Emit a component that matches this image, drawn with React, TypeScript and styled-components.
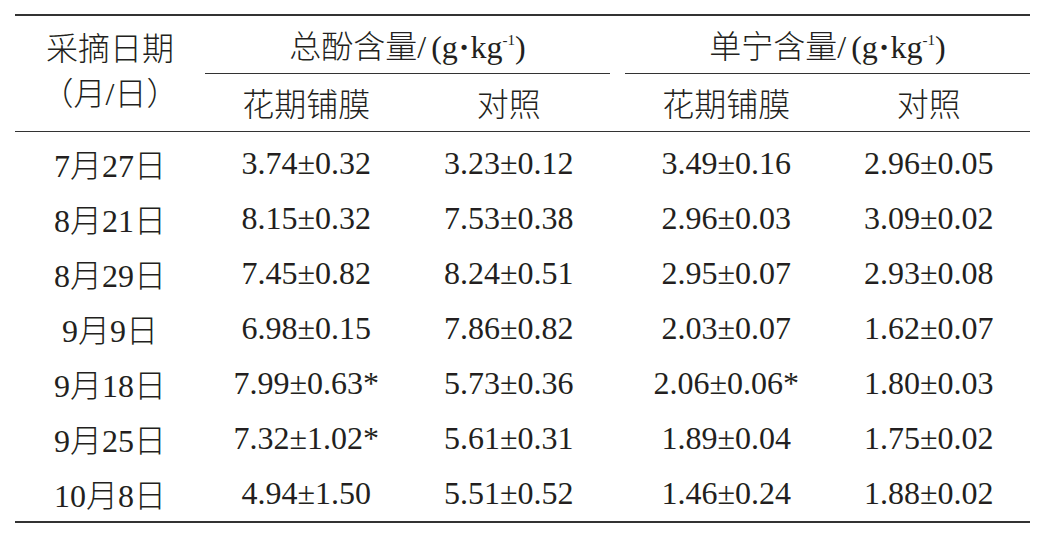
import styled, { createGlobalStyle } from "styled-components";

const GlobalStyle = createGlobalStyle`
  html, body {
    margin: 0;
    padding: 0;
    background: #ffffff;
  }
  body {
    font-family: "Liberation Serif", "Noto Sans CJK SC", serif;
    font-weight: 300;
    color: #231f20;
  }
`;

type Row = { date: string; values: string[] };

const rows: Row[] = [
  { date: "7月27日", values: ["3.74±0.32", "3.23±0.12", "3.49±0.16", "2.96±0.05"] },
  { date: "8月21日", values: ["8.15±0.32", "7.53±0.38", "2.96±0.03", "3.09±0.02"] },
  { date: "8月29日", values: ["7.45±0.82", "8.24±0.51", "2.95±0.07", "2.93±0.08"] },
  { date: "9月9日", values: ["6.98±0.15", "7.86±0.82", "2.03±0.07", "1.62±0.07"] },
  { date: "9月18日", values: ["7.99±0.63*", "5.73±0.36", "2.06±0.06*", "1.80±0.03"] },
  { date: "9月25日", values: ["7.32±1.02*", "5.61±0.31", "1.89±0.04", "1.75±0.02"] },
  { date: "10月8日", values: ["4.94±1.50", "5.51±0.52", "1.46±0.24", "1.88±0.02"] },
];

function App() {
  return (
    <>
      <GlobalStyle />
      <Page>
        <Table>
          <Head>
            <DateHead>
              <span>采摘日期</span>
              <span>（月/日）</span>
            </DateHead>
            <GroupHead $col={2}>
              <span>
                总酚含量/<Paren>(</Paren>g<Dot>·</Dot>kg<Sup>-1</Sup>)
              </span>
            </GroupHead>
            <GroupHead $col={5}>
              <span>
                单宁含量/<Paren>(</Paren>g<Dot>·</Dot>kg<Sup>-1</Sup>)
              </span>
            </GroupHead>
            <SubHead $col={2}>花期铺膜</SubHead>
            <SubHead $col={3}>对照</SubHead>
            <SubHead $col={5}>花期铺膜</SubHead>
            <SubHead $col={6}>对照</SubHead>
          </Head>
          <Body>
            {rows.map((r) => (
              <BodyRow key={r.date}>
                <Cell $col={1}>{r.date}</Cell>
                <Cell $col={2}>{r.values[0]}</Cell>
                <Cell $col={3}>{r.values[1]}</Cell>
                <Cell $col={5}>{r.values[2]}</Cell>
                <Cell $col={6}>{r.values[3]}</Cell>
              </BodyRow>
            ))}
          </Body>
        </Table>
      </Page>
    </>
  );
}

const columns = "190px 202.5px 202.5px 15px 202.5px 202.5px";

const Page = styled.div`
  padding: 14px 12px 14px 15px;
`;

const Table = styled.div`
  width: 1015px;
  border-top: 2px solid #333333;
  border-bottom: 2px solid #333333;
  font-size: 32px;
`;

const Head = styled.div`
  display: grid;
  grid-template-columns: ${columns};
  grid-template-rows: 58px 56.5px;
  border-bottom: 1.5px solid #333333;
`;

const DateHead = styled.div`
  grid-column: 1;
  grid-row: 1 / span 2;
  display: flex;
  flex-direction: column;
  align-items: center;
  justify-content: center;
  line-height: 45px;
  padding-bottom: 2px;
`;

const GroupHead = styled.div<{ $col: number }>`
  grid-column: ${(p) => p.$col} / span 2;
  grid-row: 1;
  display: flex;
  align-items: center;
  justify-content: center;
  border-bottom: 1.5px solid #333333;
  padding-bottom: 2px;
  white-space: nowrap;
`;

const Paren = styled.span`
  margin-left: 5px;
`;

const Dot = styled.span`
  font-weight: 700;
  margin: 0 1px;
`;

const SubHead = styled.div<{ $col: number }>`
  grid-column: ${(p) => p.$col};
  grid-row: 2;
  display: flex;
  align-items: center;
  justify-content: center;
`;

const Sup = styled.sup`
  font-size: 15px;
  vertical-align: 13px;
  line-height: 0;
`;

const Body = styled.div`
  padding: 4px 0 0;
`;

const BodyRow = styled.div`
  display: grid;
  grid-template-columns: ${columns};
  height: 55px;
`;

const Cell = styled.div<{ $col: number }>`
  grid-column: ${(p) => p.$col};
  display: flex;
  align-items: center;
  justify-content: center;
  white-space: nowrap;
`;

export default App;
